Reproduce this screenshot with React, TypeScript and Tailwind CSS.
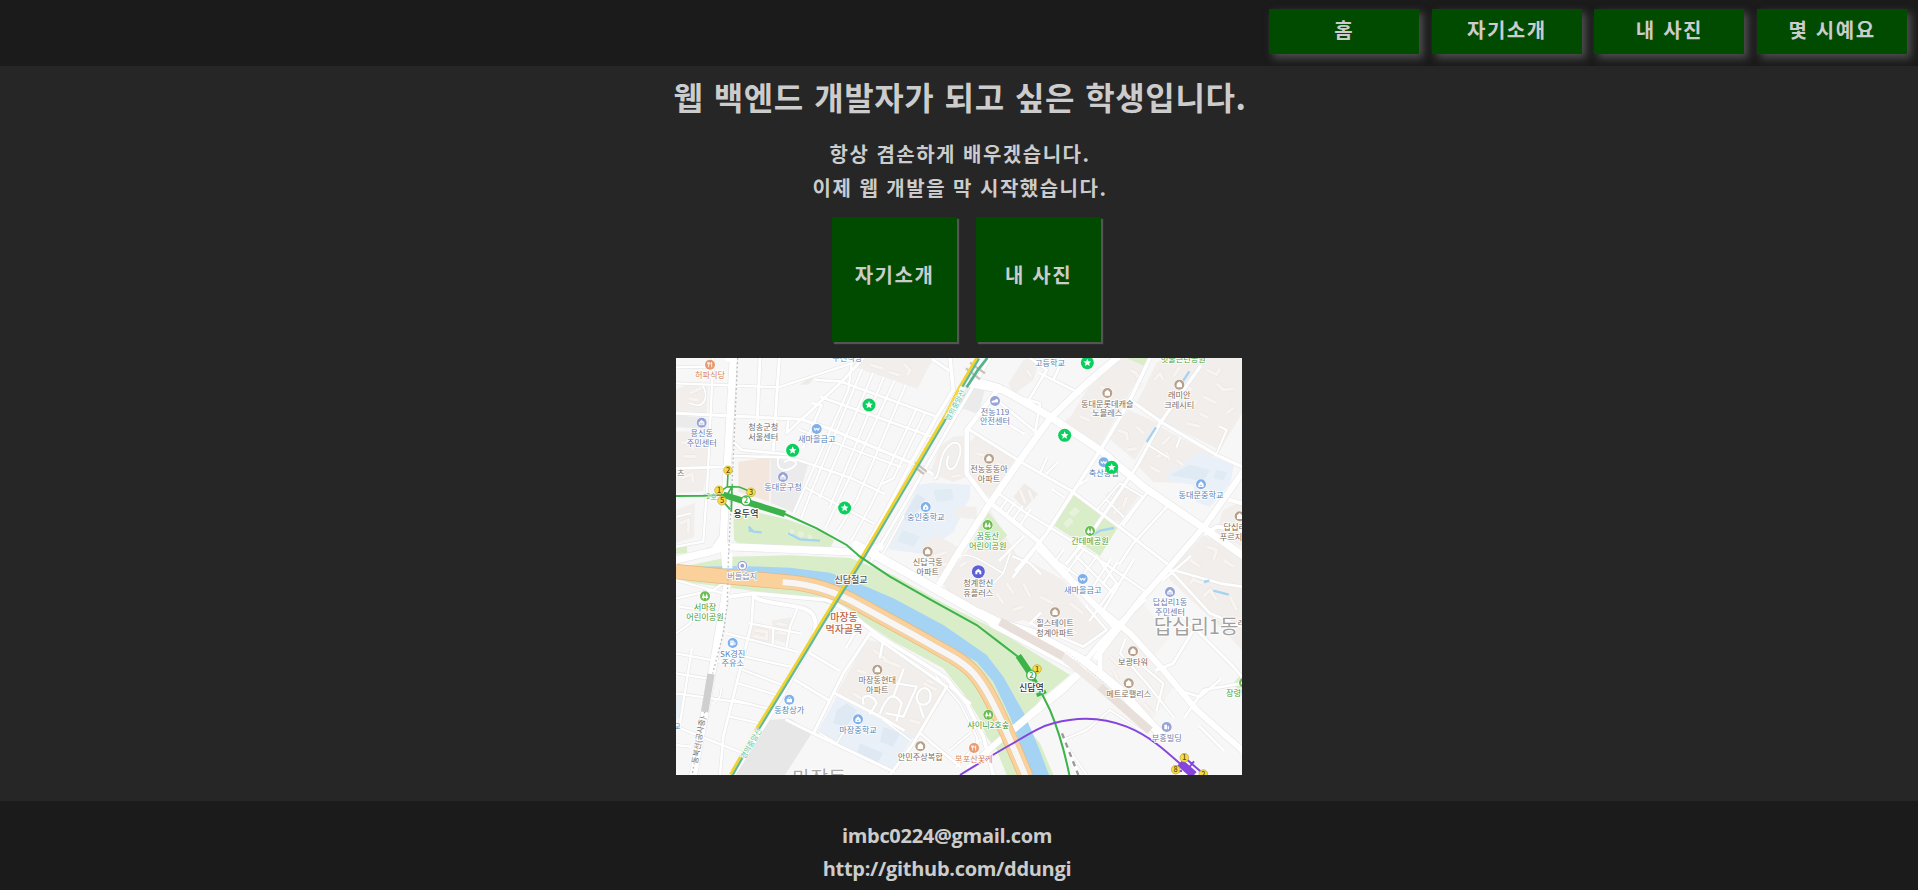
import React from 'react';

const navItems = ['홈', '자기소개', '내 사진', '몇 시예요'];

type Shape = [points: string, fill: string];
type Road = [d: string, width: number];
type Place = { x: number; y: number; lines: string[]; color: string; icon?: string; glyph?: string; iy?: number; ix?: number; size?: number };

const APT = '#f2eeeb';
const SCHOOL = '#e9f0f7';
const PARK = '#d9edc9';
const GREY = '#ebebec';

const areas: Shape[] = [
  ['18,118 60,100 114,106 110,190 18,186', APT],
  ['18,196 110,204 110,236 18,232', GREY],
  ['18,244 108,246 114,345 100,424 18,430', APT],
  ['18,480 75,458 72,562 18,578', APT],
  ['18,590 50,586 52,608 18,612', PARK],
  ['545,24 790,24 742,116 660,88 570,58', APT],
  ['390,104 424,78 430,86 416,104', '#eeece6'],
  ['205,335 300,322 297,455 205,425', '#f3e7dd'],
  ['302,322 415,342 372,488 302,458', GREY],
  ['745,404 790,398 900,404 900,440 850,545 760,612 655,598', SCHOOL],
  ['780,370 810,290 850,260 886,256 890,380 850,396', APT],
  ['760,582 800,556 880,600 840,690 800,680', APT],
  ['880,130 890,80 920,84 944,120 925,192 862,170', GREY],
  ['1016,100 1060,30 1110,24 1090,90 1030,134', APT],
  ['1202,200 1252,118 1310,60 1330,24 1438,24 1290,286 1184,214', APT],
  ['1400,160 1460,40 1480,24 1716,24 1716,190 1650,300 1480,216', APT],
  ['1312,262 1376,180 1462,218 1394,330', APT],
  ['1404,348 1470,230 1630,316 1530,398 1450,396', APT],
  ['1490,376 1590,306 1692,346 1680,400 1620,470 1578,456 1570,404 1498,394', SCHOOL],
  ['1636,550 1660,480 1716,452 1716,590', APT],
  ['1500,660 1600,556 1716,604 1716,900 1660,840 1500,690', APT],
  ['884,290 920,256 1034,330 960,440 900,400', APT],
  ['840,408 862,408 880,470 840,520', SCHOOL],
  ['860,470 920,470 920,508 856,502', APT],
  ['1030,440 1064,400 1104,432 1064,476', '#eeebe8'],
  ['1150,525 1212,435 1348,525 1290,618', PARK],
  ['1296,500 1352,398 1412,430 1350,516', APT],
  ['820,700 900,590 955,470 1040,614 1180,690 1300,840 1240,896 1060,810 960,830 850,760', APT],
  ['900,600 952,484 1012,556 960,600', PARK],
  ['1370,24 1440,24 1424,48', PARK],
  ['1560,24 1590,24 1570,44', PARK],
  ['1290,900 1410,750 1500,860 1450,920 1510,1010 1440,1120 1300,990', '#f4f3f1'],
  ['1690,1000 1716,970 1716,1040', PARK],
  ['238,832 252,822 308,836 304,880 240,866', APT],
  ['305,812 362,802 352,880 314,870', '#f0efec'],
  ['500,1030 590,870 650,880 840,1010 740,1170 640,1110', APT],
  ['440,1150 500,1040 730,1160 660,1265', SCHOOL],
  ['268,1145 300,1110 360,1105 425,1150 345,1275 195,1275', '#e7e7e7'],
  ['18,1040 36,1020 30,1100 18,1110', SCHOOL],
  ['480,820 530,790 500,840', '#f6f0ec'],
];

const banks: Shape[] = [
  ['190,492 240,482 350,508 470,550 492,572 478,598 210,586 192,570', PARK],
  ['18,655 180,620 360,616 540,624 670,676 820,760 990,845 1200,975 1110,1050 1060,1120 1110,1180 1150,1275 1010,1275 980,1200 950,1160 925,1100 880,1030 820,955 670,874 570,808 500,768 400,742 200,716 18,692', PARK],
];

const roads: Road[] = [
  ['M18 52 L110 50 M18 100 L325 112 L545 40 M130 24 L112 400 L100 575 L18 590', 7],
  ['M18 190 L395 208 L520 90 L580 24 M270 24 L262 205 M328 24 L322 110 L310 300', 9],
  ['M395 208 L475 235 L740 345 L785 370', 10],
  ['M195 318 L350 322 L385 330 L545 385 L640 430', 8],
  ['M22 355 L185 350 M195 280 L215 300 L345 312 M355 210 L350 250 L395 206', 8],
  ['M440 90 L510 94 L800 200 M455 142 L790 262 M400 290 L455 165 L430 160', 8],
  ['M545 40 L535 120 L370 490 M575 60 L430 410 L395 500 M608 72 L450 440 M640 84 L480 470', 7],
  ['M672 95 L540 380 L468 530 M706 108 L560 450 L502 545 M738 180 L600 470 L545 570', 7],
  ['M765 190 L670 385 L640 400 M410 415 L610 520 M390 240 L690 350', 7],
  ['M840 24 L850 120 L800 200 L720 345 L640 500 L590 590', 11],
  ['M960 24 L850 210 L700 470 L600 640 M790 30 L835 60', 9],
  ['M700 500 L640 610 M890 320 L890 370 M795 385 C815 375 800 310 845 280 C880 270 875 310 860 340 C850 370 820 360 835 320', 6],
  ['M325 320 C315 360 345 370 372 350 C390 335 365 324 345 335', 6],
  ['M60 160 C105 180 115 140 100 110 M22 500 L60 490', 5],
  ['M175 24 L190 24 L160 560 L172 700 L110 1060 L70 1275', 22],
  ['M18 630 L110 608 L170 590 L560 606 L630 590 M140 590 L160 560', 22],
  ['M560 585 L600 606 L670 645 L820 730 L940 798 L1010 830', 26],
  ['M900 100 L1000 120 L1140 200 L1290 300 L1420 410 L1610 540 L1716 615', 22],
  ['M1340 24 L1250 100 L1140 205 L1050 330 L960 460 L870 600 L810 700', 20],
  ['M920 90 L990 110 L890 240 L890 370 L950 450 L1100 570 L1250 740 L1340 840', 14],
  ['M900 240 L1060 340 L1200 420 L1360 540 L1490 640', 9],
  ['M1010 130 L1110 160 L1095 250 M980 150 L1090 240 M960 190 L1060 250', 8],
  ['M1080 24 L1130 60 L1070 160 M1180 24 L1150 90 L1230 130 M1110 70 L1170 100', 8],
  ['M1440 24 L1380 150 L1310 270 L1200 440 L1130 550 L1040 660', 11],
  ['M1590 50 L1470 220 L1400 350 L1270 540 L1190 640', 10],
  ['M1380 150 L1480 220 L1640 315 L1716 350', 10],
  ['M1716 370 L1610 520 L1500 650 L1410 750 L1280 920', 18],
  ['M1435 285 L1490 320 M1640 310 L1670 240 L1650 230 M1520 290 L1530 264', 6],
  ['M1280 480 L1350 400 L1418 440 L1350 525 M1310 450 L1360 500', 6],
  ['M1440 415 L1360 525 M1500 460 L1390 580 L1350 640', 8],
  ['M985 430 L1070 490 L1170 550 L1290 630 L1420 720 M1060 560 L990 630 M1110 580 L1030 680', 8],
  ['M1010 450 L990 480 M1033 460 L1008 496 M1056 470 L1028 510 M1080 480 L1048 530', 7],
  ['M1110 370 L1130 325 M1130 370 L1160 340 M1150 420 L1180 440 M1220 410 L1250 390', 7],
  ['M1030 620 L1080 640 L1110 670 M1240 600 L1180 680 M1280 620 L1220 700', 7],
  ['M870 620 C900 600 960 650 1000 670 L970 700 M1020 610 L1000 670', 5],
  ['M1180 600 C1150 640 1140 650 1170 640 L1240 690 M1320 630 L1250 740', 7],
  ['M1110 600 L1190 680 L1280 770 L1380 850 L1480 960 L1580 1080 L1716 1200', 18],
  ['M1716 710 L1650 700 L1510 660 M1500 660 L1620 790 L1716 830', 8],
  ['M1716 540 L1640 530 L1610 550 M1680 450 L1716 460', 12],
  ['M930 790 L990 820 L1090 850 L1240 930 L1350 1020 L1450 1130 L1480 1160', 26],
  ['M940 798 L970 828 L1090 890 L1230 965 L1290 1005 L1420 1130', 14],
  ['M1240 940 L1290 880 L1420 750 M1290 960 L1290 900', 15],
  ['M1280 620 L1340 700 L1260 810 M1220 620 L1330 730 M1390 630 L1300 780', 8],
  ['M1080 820 L1240 890 L1310 840 L1250 770 M1080 820 L1110 790', 8],
  ['M1365 870 L1350 910 L1430 1000 L1510 1100 M1420 950 L1480 1000 L1460 1080', 7],
  ['M1530 790 L1690 950 L1716 980 M1460 960 L1510 940 L1570 840', 9],
  ['M1520 1020 L1590 1040 L1650 990 M1545 1100 L1600 1020 L1716 1000 M1590 1130 L1660 1200', 8],
  ['M1480 690 L1560 620 M1340 640 L1300 700', 8],
  ['M1240 960 L1180 1020 L1040 1130 L990 1170 L900 1250', 18],
  ['M1190 1165 L1250 1140 L1320 1080 L1410 1140 M1170 1160 L1250 1275', 6],
  ['M180 740 L250 730 L470 750 C530 772 560 810 640 866 L760 940 L830 985 L890 1060 L940 1160 L970 1275', 11],
  ['M18 690 L160 730 M18 745 L130 720 L176 690 M30 770 L160 790', 7],
  ['M250 735 L245 820 L200 1000 L160 1160 L150 1275', 8],
  ['M250 735 C260 760 350 760 400 775 C450 790 440 840 420 880 L340 1030 L190 1275', 12],
  ['M380 780 L360 830 L350 890 M310 840 L308 880 M240 820 L390 850', 7],
  ['M170 850 L380 905 M225 920 L360 950 M220 960 L350 1010 M205 1000 L335 1040 M190 1050 L310 1080', 7],
  ['M18 850 L60 820 L70 800 M18 910 L150 935 M18 970 L110 985 M18 1030 L230 1060', 7],
  ['M18 1130 L220 1210 M18 1185 L60 1190 M180 1100 L270 1120 M65 900 L30 1120', 7],
  ['M130 1060 L150 1040 L155 1010', 5],
  ['M375 990 L475 1050 M420 910 L505 960 M530 890 L560 840', 8],
  ['M350 1110 L430 1150 L670 1265 M430 1150 L520 970 L600 850', 9],
  ['M495 1030 L640 1105 L700 1140 M600 850 L830 1010 L730 1180 L660 1275', 9],
  ['M840 1010 L900 1060 M750 1150 L870 1250 M640 870 L630 920', 8],
  ['M580 1060 C570 1030 610 1030 620 1060 L600 1090 M630 1090 C650 1040 670 1020 695 1060 L680 1110', 7],
  ['M680 1000 L740 1010 L700 1100 L650 1090 M700 960 L670 1040', 7],
  ['M740 1040 C750 1000 790 1010 780 1050 C770 1070 740 1070 740 1040 M750 1070 L760 1100', 7],
  ['M450 1150 L500 1180 L530 1130 M640 1110 L720 1170', 5],
  ['M800 980 L870 1060 L920 1160 L925 1220', 6],
  ['M840 1200 L900 1150 M860 1250 L930 1170', 6],
];

const blobs: string[] = [
  'M60 130 L98 112 M56 146 L86 150',
  'M34 280 L62 272 L70 300 M40 320 L80 320 M36 384 L66 372 L70 396',
  'M30 520 L56 510 L54 550',
  'M600 44 L640 56 M700 40 L720 60 L712 76 M656 66 L690 76',
  'M846 380 L872 376 M790 386 L806 380',
  'M790 620 L830 606 M800 646 L850 640',
  'M1230 200 L1260 212 M1290 110 L1320 120 M1260 180 L1300 190 M1320 190 L1340 160',
  'M1380 60 L1398 70 L1412 94 M1390 100 L1414 106 M1452 90 L1470 70 L1480 90',
  'M1510 80 L1530 50 M1540 100 L1566 120 M1610 60 L1640 74 L1650 56 M1640 100 L1660 120 L1690 116',
  'M1600 140 L1640 160 M1590 190 L1614 204 M1550 220 L1590 230 M1670 190 L1690 174 M1580 150 L1570 170',
  'M1344 240 L1370 250 L1372 270 M1400 230 L1420 250 M1370 300 L1400 296',
  'M1460 320 L1490 310 L1500 330 M1476 284 L1500 260 M1440 350 L1470 366 M1520 330 L1540 346',
  'M1070 60 L1084 80 M920 310 L960 320 M980 340 L1000 350 M920 380 L950 376',
  'M1050 420 L1066 460 M1076 420 L1088 450',
  'M1310 430 L1336 460 M1370 440 L1360 470 M1330 490 L1350 474',
  'M1560 630 L1590 650 M1610 590 L1640 600 L1630 630 M1660 630 L1690 650 M1570 690 L1600 700',
  'M1600 740 L1620 720 L1640 750 M1560 700 L1574 680 M1680 740 L1700 780 M1630 800 L1670 820',
  'M870 650 L890 636 M1010 700 L1030 730 M980 730 L1000 760 M1030 780 L1060 770 M1060 700 L1080 740 M1110 740 L1150 760 M1200 760 L1240 790 M1180 830 L1220 850',
  'M1320 920 L1350 950 M1400 930 L1380 960 M1420 1060 L1450 1090 M1330 960 L1344 990',
  'M255 840 L290 846 L290 866 L250 858 M320 820 L350 826 M320 846 L350 852',
  'M560 960 L590 970 M640 930 L690 950 M610 900 L650 930 M760 1000 L800 1020 M720 1110 L750 1120 M550 1030 L580 1050 M770 990 L790 1000',
];

const schoolBlocks: Shape[] = [
  ['696,506 740,432 766,446 722,520', '#dfe9f3'],
  ['790,420 846,416 850,450 800,456', '#e1ebf4'],
  ['700,540 750,560 730,590 680,574', '#e1ebf4'],
  ['1500,376 1560,344 1620,360 1600,394', '#e0eaf4'],
  ['1640,360 1672,366 1660,392 1630,384', '#e1ebf4'],
  ['500,1080 530,1060 560,1080 530,1130 490,1120', '#dfe9f4'],
  ['570,1180 640,1210 620,1240 560,1212', '#dfe9f4'],
  ['640,1130 690,1150 670,1190 630,1176', '#dfe9f4'],
  ['1180,520 1200,502 1212,516 1190,534', '#e6f2dc'],
  ['1196,488 1216,470 1230,484 1210,502', '#e6f2dc'],
];

const BLUE = '#5585b8';
const NAVY = '#6c7dad';
const BROWN = '#7b6b60';
const GREEN = '#449c34';
const iBlue = '#7fb0ea';
const iNavy = '#98a4d6';
const iBrown = '#b79f88';
const iGreen = '#6cbd51';
const iOrange = '#e69a70';

const places: Place[] = [
  { x: 120, y: 84, lines: ['허파식당'], color: '#d97e50', icon: iOrange, glyph: 'fork', iy: 44 },
  { x: 532, y: 33, lines: ['우진식당'], color: BLUE },
  { x: 95, y: 258, lines: ['용신동', '주민센터'], color: NAVY, icon: iNavy, glyph: 'hall', iy: 218 },
  { x: 280, y: 241, lines: ['청송군청', '서울센터'], color: '#6b6b6b' },
  { x: 440, y: 276, lines: ['새마을금고'], color: BLUE, icon: iBlue, glyph: 'W', iy: 237 },
  { x: 339, y: 421, lines: ['동대문구청'], color: NAVY, icon: iNavy, glyph: 'hall', iy: 381 },
  { x: 32, y: 377, lines: ['츠'], color: '#777' },
  { x: 767, y: 511, lines: ['숭인중학교'], color: BLUE, icon: iBlue, glyph: 'school', iy: 471 },
  { x: 773, y: 646, lines: ['신답극동', '아파트'], color: BROWN, icon: iBrown, glyph: 'home', iy: 605 },
  { x: 217, y: 688, lines: ['버들습지'], color: '#7d87a5', icon: iNavy, glyph: 'dot', iy: 647 },
  { x: 1140, y: 48, lines: ['고등학교'], color: BLUE },
  { x: 1540, y: 37, lines: ['빗물근린공원'], color: GREEN },
  { x: 975, y: 194, lines: ['전농119', '안전센터'], color: NAVY, icon: iNavy, glyph: 'car', iy: 153 },
  { x: 1312, y: 170, lines: ['동대문롯데캐슬', '노블레스'], color: BROWN, icon: iBrown, glyph: 'home', iy: 129 },
  { x: 1528, y: 145, lines: ['래미안', '크레시티'], color: BROWN, icon: iBrown, glyph: 'home', iy: 104 },
  { x: 957, y: 366, lines: ['전농동동아', '아파트'], color: BROWN, icon: iBrown, glyph: 'home', iy: 326 },
  { x: 1301, y: 377, lines: ['축산농협'], color: BLUE, icon: iBlue, glyph: 'W', iy: 337 },
  { x: 1593, y: 443, lines: ['동대문중학교'], color: BLUE, icon: iBlue, glyph: 'school', iy: 403 },
  { x: 1694, y: 540, lines: ['답십리', '푸르지오'], color: BROWN, icon: iBrown, glyph: 'home', iy: 499, ix: 1709 },
  { x: 953, y: 567, lines: ['꿈동산', '어린이공원'], color: GREEN, icon: iGreen, glyph: 'tree', iy: 525 },
  { x: 1260, y: 583, lines: ['간데메공원'], color: GREEN, icon: iGreen, glyph: 'tree', iy: 543 },
  { x: 925, y: 709, lines: ['청계한신', '휴플러스'], color: BROWN, icon: '#5e60d6', glyph: 'homeBig', iy: 665 },
  { x: 1238, y: 728, lines: ['새마을금고'], color: BLUE, icon: iBlue, glyph: 'W', iy: 687 },
  { x: 1500, y: 766, lines: ['답십리1동', '주민센터'], color: NAVY, icon: iNavy, glyph: 'hall', iy: 726 },
  { x: 1155, y: 828, lines: ['힐스테이트', '청계아파트'], color: BROWN, icon: iBrown, glyph: 'home', iy: 787 },
  { x: 1389, y: 945, lines: ['보광타워'], color: BROWN, icon: iBrown, glyph: 'home', iy: 904 },
  { x: 1376, y: 1041, lines: ['메트로팰리스'], color: BROWN, icon: iBrown, glyph: 'home', iy: 1000 },
  { x: 1702, y: 1038, lines: ['장령당'], color: GREEN, icon: iGreen, glyph: 'tree', iy: 998, ix: 1722 },
  { x: 1490, y: 1172, lines: ['부흥빌딩'], color: NAVY, icon: iNavy, glyph: 'bldg', iy: 1131 },
  { x: 955, y: 1134, lines: ['샤이니2호숲'], color: GREEN, icon: iGreen, glyph: 'tree', iy: 1094 },
  { x: 912, y: 1235, lines: ['목포산꽃게'], color: '#d97e50', icon: iOrange, glyph: 'fork', iy: 1194 },
  { x: 105, y: 780, lines: ['서마장', '어린이공원'], color: GREEN, icon: iGreen, glyph: 'tree', iy: 739 },
  { x: 188, y: 920, lines: ['SK경진', '주유소'], color: BLUE, icon: iBlue, glyph: 'gas', iy: 879 },
  { x: 358, y: 1090, lines: ['동창상가'], color: BLUE, icon: iBlue, glyph: 'bag', iy: 1049 },
  { x: 564, y: 1149, lines: ['마장중학교'], color: BLUE, icon: iBlue, glyph: 'school', iy: 1108 },
  { x: 622, y: 1000, lines: ['마장동현대', '아파트'], color: BROWN, icon: iBrown, glyph: 'home', iy: 959 },
  { x: 751, y: 1230, lines: ['안민주상복합'], color: BROWN, icon: iBrown, glyph: 'home', iy: 1189 },
  { x: 543, y: 699, lines: ['신답철교'], color: '#555', size: 27 },
  { x: 522, y: 813, lines: ['마장동', '먹자골목'], color: '#bb6345', size: 30 },
];

const stars: [number, number][] = [[597, 165], [368, 301], [524, 474], [1252, 38], [1184, 256], [1325, 352]];
const exits: [number, number, string][] = [
  [174, 361, '2'], [147, 421, '1'], [243, 427, '3'], [156, 452, '5'], [1101, 957, '1'],
  [1543, 1223, '1'], [1517, 1259, '8'], [1600, 1272, '2'],
];

function Glyph({ kind }: { kind?: string }) {
  const s = { fill: 'none', stroke: '#fff', strokeWidth: 2.4 };
  switch (kind) {
    case 'home':
      return <path d="M-8 8V-3L0 -10L8 -3V8Z" fill="#fff" />;
    case 'homeBig':
      return <path d="M-9 -1L0 -9L9 -1V8H3V2H-3V8H-9Z" fill="#fff" />;
    case 'tree':
      return <path d="M-5 -9L-1 0L1 5H-4V9H-6V5H-10ZM5 -9L10 5H6V9H4V5H0Z" fill="#fff" />;
    case 'W':
      return <path d="M-8 -4L-4 5L0 -3L4 5L8 -4M-9 0H9" {...s} />;
    case 'fork':
      return <path d="M-4 8V-8M-7 -7V-2H-1V-7M5 8V-7C2 -5 2 0 5 1" {...s} />;
    case 'hall':
      return <path d="M-9 -1L0 -9L9 -1V8H-9ZM-5 1H5M-5 4H5" fill="#fff" stroke={iNavy} strokeWidth="1.5" />;
    case 'school':
      return <path d="M-8 8V-1L0 -9L8 -1V8ZM-2 1H2V5H-2Z" fill="#fff" fillRule="evenodd" />;
    case 'dot':
      return <><circle r="11" fill="#fff" /><circle r="6" fill={iNavy} /></>;
    case 'car':
      return <path d="M-10 5V0L1 -3L3 -7L9 -4V4Z" fill="#fff" />;
    case 'bldg':
      return <path d="M-7 7V-7H1V7M3 7V-2H7V7Z" fill="#fff" />;
    case 'gas':
      return <path d="M-7 7V-7H3V7ZM5 -4L8 -1V5H5M-4 -4H0V-1H-4Z" fill="#fff" fillRule="evenodd" stroke="#fff" />;
    case 'bag':
      return <><path d="M-8 8V-2H8V8Z" fill="#fff" /><path d="M-4 -2C-4 -9 4 -9 4 -2" {...s} /></>;
    default:
      return null;
  }
}

const LINE2 = 'M18 438L100 437L160 434L345 492L440 535L530 585L570 620L660 680L780 748L920 825L985 875L1050 925L1085 985L1115 1030L1140 1080C1165 1140 1185 1210 1198 1275';
const RAIL = 'M925 24L870 118L820 215L700 418L575 630L460 815L345 1005L265 1135L185 1275';
const HIGHWAY = 'M18 665L150 678L340 695C430 700 500 724 570 765L720 847L850 920C900 950 920 975 945 1015C990 1090 1030 1190 1068 1280';

function CityMap() {
  return (
    <svg
      viewBox="18 24 1698 1251"
      preserveAspectRatio="none"
      className="block h-[417px] w-[566px] bg-[#f7f7f7] font-['Noto_Sans_CJK_KR','Noto_Sans',sans-serif] font-normal"
    >
      {areas.map(([p, f], i) => <polygon key={i} points={p} fill={f} />)}
      {schoolBlocks.map(([p, f], i) => <polygon key={i} points={p} fill={f} />)}
      <g fill="none" stroke="#eae4df" strokeWidth="13">
        {blobs.map((d, i) => <path key={i} d={d} />)}
      </g>
      <g fill="none" stroke="#f7f4f1" strokeWidth="10">
        {blobs.map((d, i) => <path key={i} d={d} />)}
      </g>
      {banks.map(([p, f], i) => <polygon key={i} points={p} fill={f} />)}
      <g fill="none" strokeLinejoin="round" stroke="#e6e5e5">
        {roads.map(([d, w], i) => <path key={i} d={d} strokeWidth={w + 3.5} />)}
      </g>
      <g fill="none" strokeLinejoin="round" strokeLinecap="round" stroke="#fff">
        {roads.map(([d, w], i) => <path key={i} d={d} strokeWidth={w} />)}
      </g>

      <polygon
        fill="#a5d3f4"
        points="60,650 200,648 360,653 480,668 570,702 670,745 820,825 950,915 1000,980 1062,1090 1105,1190 1137,1275 1085,1275 1050,1180 1020,1100 970,995 920,935 820,880 700,812 570,742 500,710 400,685 200,668 60,662"
      />
      <g fill="none" stroke="#a5d3f4" strokeWidth="7">
        <path d="M236 530L250 545L275 547M355 550L390 568L450 572M1268 555L1290 542L1332 534" />
        <path d="M1558 64L1536 98M1458 232L1430 276M1602 696L1618 692M1630 722L1676 734" />
      </g>
      <path d="M236 528L252 546L236 546Z" fill="#a5d3f4" />
      <g fill="#e5f2d9"><circle cx="366" cy="545" r="7" /><circle cx="392" cy="553" r="9" /><circle cx="420" cy="560" r="7" /></g>
      <path d="M1030 1138L1240 960" stroke="#fff" strokeWidth="22" />

      <path d={HIGHWAY} fill="none" stroke="#e7b67b" strokeWidth="46" />
      <path d={HIGHWAY} fill="none" stroke="#fad19a" strokeWidth="42" />
      <path d="M340 697C430 702 500 726 570 767L720 849L850 922C900 952 920 977 945 1017C990 1092 1030 1192 1068 1282" fill="none" stroke="#e8cfae" strokeWidth="22" />
      <path d="M338 697C430 702 500 726 570 767L720 849L850 922C900 952 920 977 945 1017C990 1092 1030 1192 1068 1282" fill="none" stroke="#f8f6f4" strokeWidth="18" />
      <path d="M172 610L172 655" stroke="#fff" strokeWidth="30" />
      <path d="M203 24L190 320L175 630L172 760L160 850L128 970M104 1085L66 1275" fill="none" stroke="#b9b9b9" strokeWidth="4" strokeDasharray="5 8" />
      <path d="M123 972L104 1086" stroke="#cfcfcf" strokeWidth="22" />

      <path d="M990 815L1180 920" stroke="#e9dfda" strokeWidth="25" fill="none" />
      <path d="M1180 920L1290 1010" stroke="#efeae5" strokeWidth="25" fill="none" />
      <path d="M1290 1010L1440 1142" stroke="#e9dfda" strokeWidth="25" fill="none" />
      <path d="M1190 905L1310 1004" stroke="#ccc" strokeWidth="2" strokeDasharray="4 6" />
      <path d="M1172 1150L1225 1275" stroke="#fff" strokeWidth="12" />
      <path d="M1176 1150L1225 1275" stroke="#999" strokeWidth="7" strokeDasharray="16 14" />

      <path d="M888 55L930 88M900 38L945 70M735 338L770 365M732 350L762 372" stroke="#cbc1b9" strokeWidth="7" />
      <path d={RAIL} fill="none" stroke="#f2d32c" strokeWidth="8" transform="translate(-4 -2)" />
      <path d={RAIL} fill="none" stroke="#66b892" strokeWidth="6.5" transform="translate(2 2)" />
      <path d="M952 24L925 58L890 112" fill="none" stroke="#53b38d" strokeWidth="8" />
      <path d="M880 112L828 202M260 1145L216 1220" stroke="#f8f8f8" strokeWidth="18" />
      <path d="M868 120L818 208" stroke="#f2d32c" strokeWidth="5" />
      <g fill="#76cdb0" stroke="#fff" strokeWidth="3" paintOrder="stroke" fontSize="22" fontWeight="500" textAnchor="middle">
        <text transform="translate(863 170) rotate(-61)">경의중앙선</text>
        <text transform="translate(250 1185) rotate(-59)">경의중앙선</text>
      </g>
      <text transform="translate(94 1172) rotate(-80)" fontSize="23" fill="#707070" stroke="#fff" strokeWidth="3" paintOrder="stroke" textAnchor="middle">동북선(공사중)</text>

      <path d="M174 370L172 410L208 411L243 425M172 410L150 425M165 445L186 410L184 485M160 455L180 478" fill="none" stroke="#3cb34a" strokeWidth="5" />
      <path d={LINE2} fill="none" stroke="#3cb34a" strokeWidth="6" />
      <path d="M160 434L345 492M1045 917L1088 980" stroke="#3cb34a" strokeWidth="19" />
      <path d="M1088 980L1108 1015M1100 1036L1128 1024" stroke="#3cb34a" strokeWidth="11" />
      <text x="125" y="446" fontSize="22" fill="#55bb66" stroke="#fff" strokeWidth="3" paintOrder="stroke" textAnchor="middle">2호</text>
      <path d="M870 1275C930 1238 975 1210 1020 1185C1080 1150 1110 1130 1150 1120C1240 1095 1310 1106 1370 1130C1440 1158 1490 1205 1540 1250L1560 1275" fill="none" stroke="#8545dc" strokeWidth="6" />
      <path d="M1530 1238L1572 1275" stroke="#8545dc" strokeWidth="24" />
      <path d="M1550 1228L1598 1270M1572 1234L1556 1254M1520 1265L1536 1262" stroke="#8545dc" strokeWidth="6" />

      <g textAnchor="middle" stroke="#fff" strokeWidth="5" strokeLinejoin="round" paintOrder="stroke">
        {places.map((p, i) =>
          p.lines.map((line, j) => (
            <text key={`${i}-${j}`} x={p.x} y={p.y + j * (p.size === 30 ? 37 : 29)} fontSize={p.size ?? 24.5} fontWeight={p.size ? 500 : 400} fill={p.color}>
              {line}
            </text>
          )),
        )}
        <text x="1578" y="853" fontSize="60" fill="#a0a0a0">답십리1동</text>
        <text x="1714" y="828" fontSize="24" fill="#777">래</text>
        <text x="448" y="1306" fontSize="59" fill="#aaa">마장동</text>
        <text x="866" y="1234" fontSize="22" fill="#d97e50">보</text>
        <text x="21" y="1136" fontSize="22" fill={BLUE}>교</text>
      </g>
      {places.filter((p) => p.icon).map((p, i) => (
        <g key={i} transform={`translate(${p.ix ?? p.x} ${p.iy})`}>
          <circle r={p.glyph === 'homeBig' ? 21 : 16.5} fill="#fff" />
          <circle r={p.glyph === 'homeBig' ? 19.5 : 15} fill={p.icon} />
          <Glyph kind={p.glyph} />
        </g>
      ))}
      <circle cx="207" cy="500" r="11" fill="#f5df75" />
      {exits.map(([x, y, n], i) => (
        <g key={i}>
          <circle cx={x} cy={y} r="13" fill="#f7dc43" stroke="#b9a445" strokeWidth="2" />
          <text x={x} y={y + 8} fontSize="22" fontWeight="500" textAnchor="middle" fill="#5c5120">{n}</text>
        </g>
      ))}
      {[[228, 452], [1084, 976]].map(([x, y]) => (
        <g key={x}>
          <circle cx={x} cy={y} r="14" fill="#fff" stroke="#3cb34a" strokeWidth="4" />
          <text x={x} y={y + 8} fontSize="22" fontWeight="700" textAnchor="middle" fill="#3cb34a">2</text>
        </g>
      ))}
      <g textAnchor="middle" stroke="#fff" strokeWidth="6" strokeLinejoin="round" paintOrder="stroke" fontSize="27" fontWeight="500" fill="#333">
        <text x="228" y="500">용두역</text>
        <text x="1084" y="1024">신답역</text>
      </g>
      {stars.map(([x, y], i) => (
        <g key={i} transform={`translate(${x} ${y})`}>
          <circle r="19.5" fill="#08cf5d" />
          <path d="M0 -12L3.4 -4.2L11.6 -3.6L5.4 1.8L7.4 10L0 5.6L-7.4 10L-5.4 1.8L-11.6 -3.6L-3.4 -4.2Z" fill="#fff" />
        </g>
      ))}
    </svg>
  );
}

export default function App() {
  return (
    <div className="flex h-[890px] w-full flex-col overflow-hidden bg-[#262626] font-['Noto_Sans_CJK_KR',sans-serif] text-xl font-bold text-[#cccccc]">
      <header className="flex h-[66px] shrink-0 justify-end gap-[12.6px] bg-[#1b1b1b] pt-[9px] pr-[11px]">
        {navItems.map((item) => (
          <a key={item} className="h-[45px] w-[150px] bg-[#004b00] text-center leading-[41px] tracking-[1.5px] [word-spacing:1.5px] shadow-[4px_4px_8px_#505050]">
            {item}
          </a>
        ))}
      </header>

      <main className="flex h-[735px] shrink-0 flex-col items-center">
        <h1 className="h-[63px] pl-[2px] text-[32px] leading-[60px] tracking-[0.6px] [word-spacing:2.4px]">웹 백엔드 개발자가 되고 싶은 학생입니다.</h1>
        <div className="mt-2 pl-[2px] text-center leading-[34px] tracking-[1.5px] [word-spacing:1px]">
          <p>항상 겸손하게 배우겠습니다.</p>
          <p>이제 웹 개발을 막 시작했습니다.</p>
        </div>
        <div className="mt-3 mb-4 ml-[15px] flex gap-[19px]">
          {['자기소개', '내 사진'].map((item) => (
            <a key={item} className="h-[125px] w-[125px] bg-[#004b00] text-center leading-[116px] tracking-[1.5px] [word-spacing:1.5px] shadow-[2px_2px_1px_#555555]">
              {item}
            </a>
          ))}
        </div>
        <CityMap />
      </main>

      <footer className="flex-1 bg-[#1b1b1b] pt-[18px] pr-6 text-center font-['Open_Sans','Noto_Sans',sans-serif] leading-[33px] tracking-[-0.3px]">
        <p>imbc0224@gmail.com</p>
        <p>http://github.com/ddungi</p>
      </footer>
    </div>
  );
}
